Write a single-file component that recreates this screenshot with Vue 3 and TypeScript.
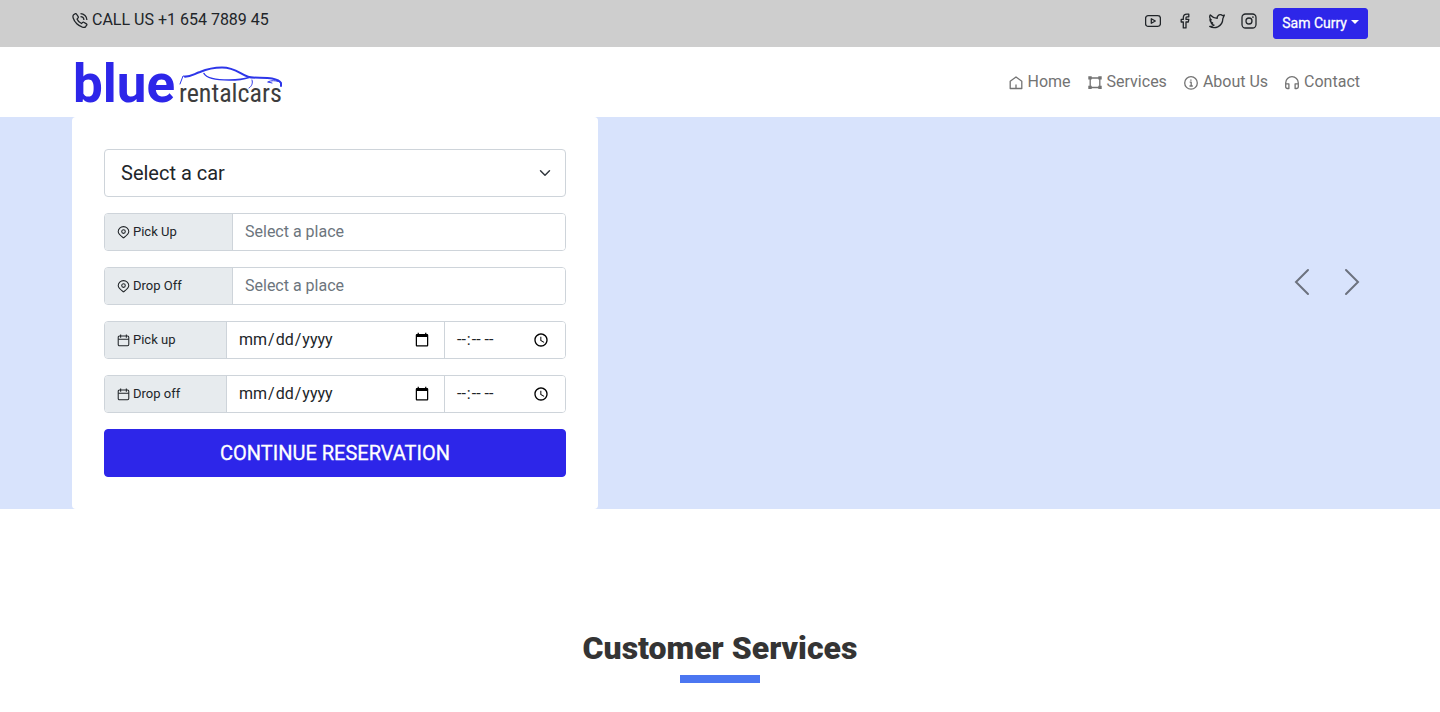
<script setup lang="ts">
import { reactive } from 'vue'

interface Leg {
  id: string
  label: string
}

interface NavItem {
  label: string
  icon: 'home' | 'services' | 'info' | 'contact'
}

const navItems: NavItem[] = [
  { label: 'Home', icon: 'home' },
  { label: 'Services', icon: 'services' },
  { label: 'About Us', icon: 'info' },
  { label: 'Contact', icon: 'contact' },
]

const places: Leg[] = [
  { id: 'place-pickup', label: 'Pick Up' },
  { id: 'place-dropoff', label: 'Drop Off' },
]

const dates: Leg[] = [
  { id: 'date-pickup', label: 'Pick up' },
  { id: 'date-dropoff', label: 'Drop off' },
]

const form = reactive<Record<string, string>>({ car: '' })
</script>

<template>
  <div class="page">
    <header>
      <div class="topbar">
        <div class="container topbar-inner">
          <a class="phone" href="tel:+1654788945">
            <svg class="icon" viewBox="0 0 16 16">
              <path d="M3.200 1.700 1.600 2.800C.8 3.500.8 4.700 1.200 6c.6 2 1.900 4.100 3.600 5.800s3.700 2.700 5.600 3.300c1.400.4 2.500.4 3.200-.4l1.100-1.500c.3-.5.2-1-.3-1.300l-2.600-1.600c-.4-.3-.9-.2-1.200.1l-1.100 1.100C7.500 10.800 5.800 9.100 5 7.100l1.100-1.200c.3-.3.3-.8.1-1.200L4.400 2c-.3-.4-.8-.5-1.200-.3z" />
              <path d="M8.500 1.600a6.500 6.500 0 0 1 6.400 6.400M8.500 4.600a3.500 3.500 0 0 1 3.400 3.400" />
            </svg>
            CALL US +1 654 7889 45
          </a>
          <div class="topbar-right">
            <div class="social">
              <a href="#" aria-label="YouTube">
                <svg class="icon" viewBox="0 0 16 16">
                  <rect x=".6" y="2.600" width="14.800" height="10.800" rx="2.600" />
                  <path d="M6.300 5.700v4.600L10.300 8z" />
                </svg>
              </a>
              <a href="#" aria-label="Facebook">
                <svg class="icon" viewBox="0 0 16 16">
                  <path d="M11.800 1.100H10C7.600 1.100 6.300 2.500 6.300 4.700v1.700H4.200V9h2.100v5.900h2.700V9h2.300l.5-2.600H9V4.800c0-.7.3-1 1-1h1.800z" />
                </svg>
              </a>
              <a href="#" aria-label="Twitter">
                <svg class="icon" viewBox="0 0 16 16">
                  <path d="M15.400 2.100 13.600 2.700C12.300 1.300 10.200 1.400 9 2.700c-.7.7-.9 1.700-.7 2.600C5.400 5.200 3 3.900 1.300 1.900c-.8 1.500-.6 3.800 1 5-.5 0-.9-.1-1.300-.4 0 1.700 1 3 2.700 3.500-.5.100-1 .100-1.500 0 .5 1.300 1.500 2 2.900 2.100C4 13.200 2.200 13.600.7 13.500c4.600 2.500 12.800 1 13.200-8.100z" />
                </svg>
              </a>
              <a href="#" aria-label="Instagram">
                <svg class="icon" viewBox="0 0 16 16">
                  <rect x="1" y="1" width="14" height="14" rx="3.500" />
                  <circle cx="8" cy="8" r="3" />
                  <circle cx="11.900" cy="4.100" r=".3" />
                </svg>
              </a>
            </div>
            <button class="user" type="button">Sam Curry<svg class="caret" viewBox="0 0 8 8"><path d="M0 2h8L4 6z" /></svg></button>
          </div>
        </div>
      </div>

      <div class="container navbar">
        <a class="brand" href="#" aria-label="blue rentalcars">
          <svg class="logo" viewBox="0 0 212 64">
            <text class="logo-blue" x="1" y="52">blue</text>
            <text class="logo-cars" x="107" y="52">rentalcars</text>
            <g class="logo-car">
              <path class="roof" d="M113 26.700C119 26.500 122 24 128 22C135 19 143 17.500 150 17.500C163 17.500 168 24 176 26.700C181 28.500 193 27 200 28.500C205 29.500 208 31 209 33V36" />
              <path class="window" d="M132 23.500C135 29 148 30 157 30C165 30 170 30 177 27.500" />
              <path d="M116 26.500 111 26 108 34M180 30C181 33 180 36 177 38M196 32C199 30 204 30.500 208 32M196 32 200 33" />
            </g>
          </svg>
        </a>
        <nav class="nav" aria-label="Main">
          <a v-for="item in navItems" :key="item.label" class="nav-link" href="#">
            <svg class="icon nav-icon" viewBox="0 0 16 16">
              <path v-if="item.icon === 'home'" d="M2.200 7.300 8 3l5.800 4.300v7.200H2.200zM8 10.500v4" />
              <g v-else-if="item.icon === 'services'">
                <path d="M4 4h8M4 13.500h8M3.200 5v8M12.800 5v8" />
                <path class="solid" d="M1.300 2.300h3.400v3.300H1.300zM11.300 2.300h3.400v3.300h-3.400zM1.300 11.700h3.400V15H1.300zM11.300 11.700h3.400V15h-3.400z" />
              </g>
              <g v-else-if="item.icon === 'info'">
                <circle cx="8" cy="8.900" r="6.300" />
                <path d="M6.700 8.200h1.500v3.600M6.500 12h3.300M7.900 5.500v1.200" />
              </g>
              <path v-else d="M1.700 13.600V8.900a6.300 6.200 0 0 1 12.600 0v4.700M4.900 9.900v4.600H3.400c-1 0-1.700-.7-1.700-1.700V9.900zM11.100 9.900v4.600h1.500c1 0 1.700-.7 1.700-1.700V9.900z" />
            </svg>
            {{ item.label }}
          </a>
        </nav>
      </div>
    </header>

    <main>
      <section class="hero">
        <div class="container hero-inner">
          <form class="booking" @submit.prevent>
            <select v-model="form.car" class="car" aria-label="Select a car">
              <option value="">Select a car</option>
            </select>

            <div v-for="place in places" :key="place.id" class="group place">
              <label :for="place.id">
                <svg class="icon" viewBox="0 0 16 16">
                  <path d="M8 14.700C5 12.400 1.500 10 1.500 6.800a6.500 6 0 0 1 13 0C14.500 10 11 12.400 8 14.700z" />
                  <circle cx="8" cy="6.900" r="2.200" />
                </svg>
                {{ place.label }}
              </label>
              <input :id="place.id" v-model="form[place.id]" type="text" placeholder="Select a place" />
            </div>

            <div v-for="date in dates" :key="date.id" class="group date">
              <label :for="date.id">
                <svg class="icon" viewBox="0 0 16 16">
                  <rect x="1.500" y="2.500" width="13" height="12" rx="1.500" />
                  <path d="M1.500 6.500h13M4.500 .5v4M11.500 .5v4" />
                </svg>
                {{ date.label }}
              </label>
              <input :id="date.id" v-model="form[date.id]" type="date" />
              <input v-model="form[date.id + '-time']" type="time" :aria-label="date.label + ' time'" />
            </div>

            <button class="submit" type="submit">CONTINUE RESERVATION</button>
          </form>

          <div class="slider">
            <button type="button" aria-label="Previous">
              <svg viewBox="0 0 32 32"><path d="M22 4 10 16l12 12" /></svg>
            </button>
            <button type="button" aria-label="Next">
              <svg viewBox="0 0 32 32"><path d="m10 4 12 12-12 12" /></svg>
            </button>
          </div>
        </div>
      </section>

      <section class="services">
        <h2>Customer Services</h2>
      </section>
    </main>
  </div>
</template>

<style>
body {
  margin: 0;
  background: #fff;
}
</style>

<style scoped>
.page,
.page * {
  box-sizing: border-box;
}

.page {
  font-family: Roboto, 'Liberation Sans', sans-serif;
  font-size: 16px;
  line-height: 24px;
  color: #212529;
}

.page a {
  color: inherit;
  text-decoration: none;
}

.container {
  width: 100%;
  max-width: 1320px;
  margin: 0 auto;
  padding: 0 12px;
}

.icon {
  width: 16px;
  height: 16px;
  flex: none;
  fill: none;
  stroke: currentColor;
  stroke-width: 1.3;
  stroke-linejoin: round;
}

.topbar {
  padding: 8px 0;
  background: #cecece;
}

.topbar-inner,
.topbar-right,
.social {
  display: flex;
  align-items: flex-start;
}

.topbar-inner {
  justify-content: space-between;
}

.phone {
  display: flex;
  align-items: center;
  gap: 4px;
}

.social {
  gap: 16px;
  padding: 5px 16px 0 0;
}

.social a {
  display: flex;
}

.user {
  display: flex;
  align-items: center;
  gap: 4px;
  padding: 4px 8px;
  border: 1px solid #2d26e9;
  border-radius: 3px;
  background: #2d26e9;
  color: #fff;
  font: 400 14px/21px Roboto, 'Liberation Sans', sans-serif;
  -webkit-text-stroke: 0.3px #fff;
}

.caret {
  width: 8px;
  height: 8px;
  margin-bottom: 3px;
  fill: #fff;
}

.navbar {
  display: flex;
  align-items: center;
  justify-content: space-between;
  min-height: 70px;
}

.brand,
.logo {
  display: block;
}

.logo {
  width: 212px;
  height: 64px;
}

.logo-blue {
  fill: #2d26e9;
  font: 700 53px Roboto, sans-serif;
}

.logo-cars {
  fill: #3d3d3d;
  font: 400 26px 'Roboto Condensed', 'Liberation Sans Narrow', Roboto, sans-serif;
}

.logo-car {
  fill: none;
  stroke: #2d36e9;
  stroke-width: 1;
  stroke-linecap: round;
}

.roof {
  stroke-width: 2;
}

.window {
  stroke-width: 1.5;
}

.nav {
  display: flex;
}

.nav-link {
  display: flex;
  align-items: center;
  gap: 4px;
  padding: 8px;
}

.page .nav-link {
  color: #737373;
}

.solid {
  fill: currentColor;
  stroke: none;
}

.hero {
  background: #d8e3fc;
}

.hero-inner {
  display: grid;
  grid-template-columns: 526px 1fr;
  align-items: center;
}

.booking {
  display: flex;
  flex-direction: column;
  gap: 16px;
  padding: 32px;
  border-radius: 4px;
  background: #fff;
}

.car {
  width: 100%;
  padding: 8px 48px 8px 16px;
  border: 1px solid #ced4da;
  border-radius: 4px;
  appearance: none;
  background: #fff url("data:image/svg+xml,%3Csvg xmlns='http://www.w3.org/2000/svg' viewBox='0 0 16 16'%3E%3Cpath fill='none' stroke='%23343a40' stroke-linecap='round' stroke-linejoin='round' stroke-width='2' d='m2 5 6 6 6-6'/%3E%3C/svg%3E") no-repeat right 14px center / 12px 12px;
  color: #212529;
  font: 400 20px/30px Roboto, 'Liberation Sans', sans-serif;
}

.group {
  display: grid;
  border: 1px solid #ced4da;
  border-radius: 4px;
  overflow: hidden;
}

.place {
  grid-template-columns: 127px 1fr;
}

.date {
  grid-template-columns: 121px 1fr 121px;
}

.group label {
  display: flex;
  align-items: center;
  gap: 3px;
  padding: 0 12px;
  background: #e7ebee;
  font-size: 13px;
}

.group label .icon {
  width: 13px;
  height: 13px;
}

.group input {
  width: 100%;
  min-width: 0;
  height: 36px;
  padding: 6px 12px 6px 11px;
  border: 0;
  border-left: 1px solid #ced4da;
  background: #fff;
  color: #212529;
  font: 400 16px/24px Roboto, 'Liberation Sans', sans-serif;
}

.group input[type='text'] {
  padding: 5px 12px 7px;
}

.group input::placeholder {
  color: #6c757d;
  opacity: 1;
}

.submit {
  padding: 8px 16px;
  border: 1px solid #2d26e9;
  border-radius: 4px;
  background: #2d26e9;
  color: #fff;
  font: 400 20px/30px Roboto, 'Liberation Sans', sans-serif;
  -webkit-text-stroke: 0.3px #fff;
}

.slider {
  display: flex;
  justify-content: flex-end;
  gap: 18px;
  padding-bottom: 62px;
}

.slider button {
  display: flex;
  padding: 0;
  border: 0;
  background: none;
}

.slider svg {
  width: 32px;
  height: 32px;
  fill: none;
  stroke: #6c727e;
  stroke-width: 2;
  stroke-linecap: round;
}

.services {
  padding: 120px 12px 28px;
  text-align: center;
}

.services h2 {
  margin: 0;
  color: #343434;
  font-size: 32px;
  line-height: 38px;
  font-weight: 900;
}

.services h2::after {
  content: '';
  display: block;
  width: 80px;
  height: 8px;
  margin: 8px auto 0;
  background: #4b76f1;
}
</style>
